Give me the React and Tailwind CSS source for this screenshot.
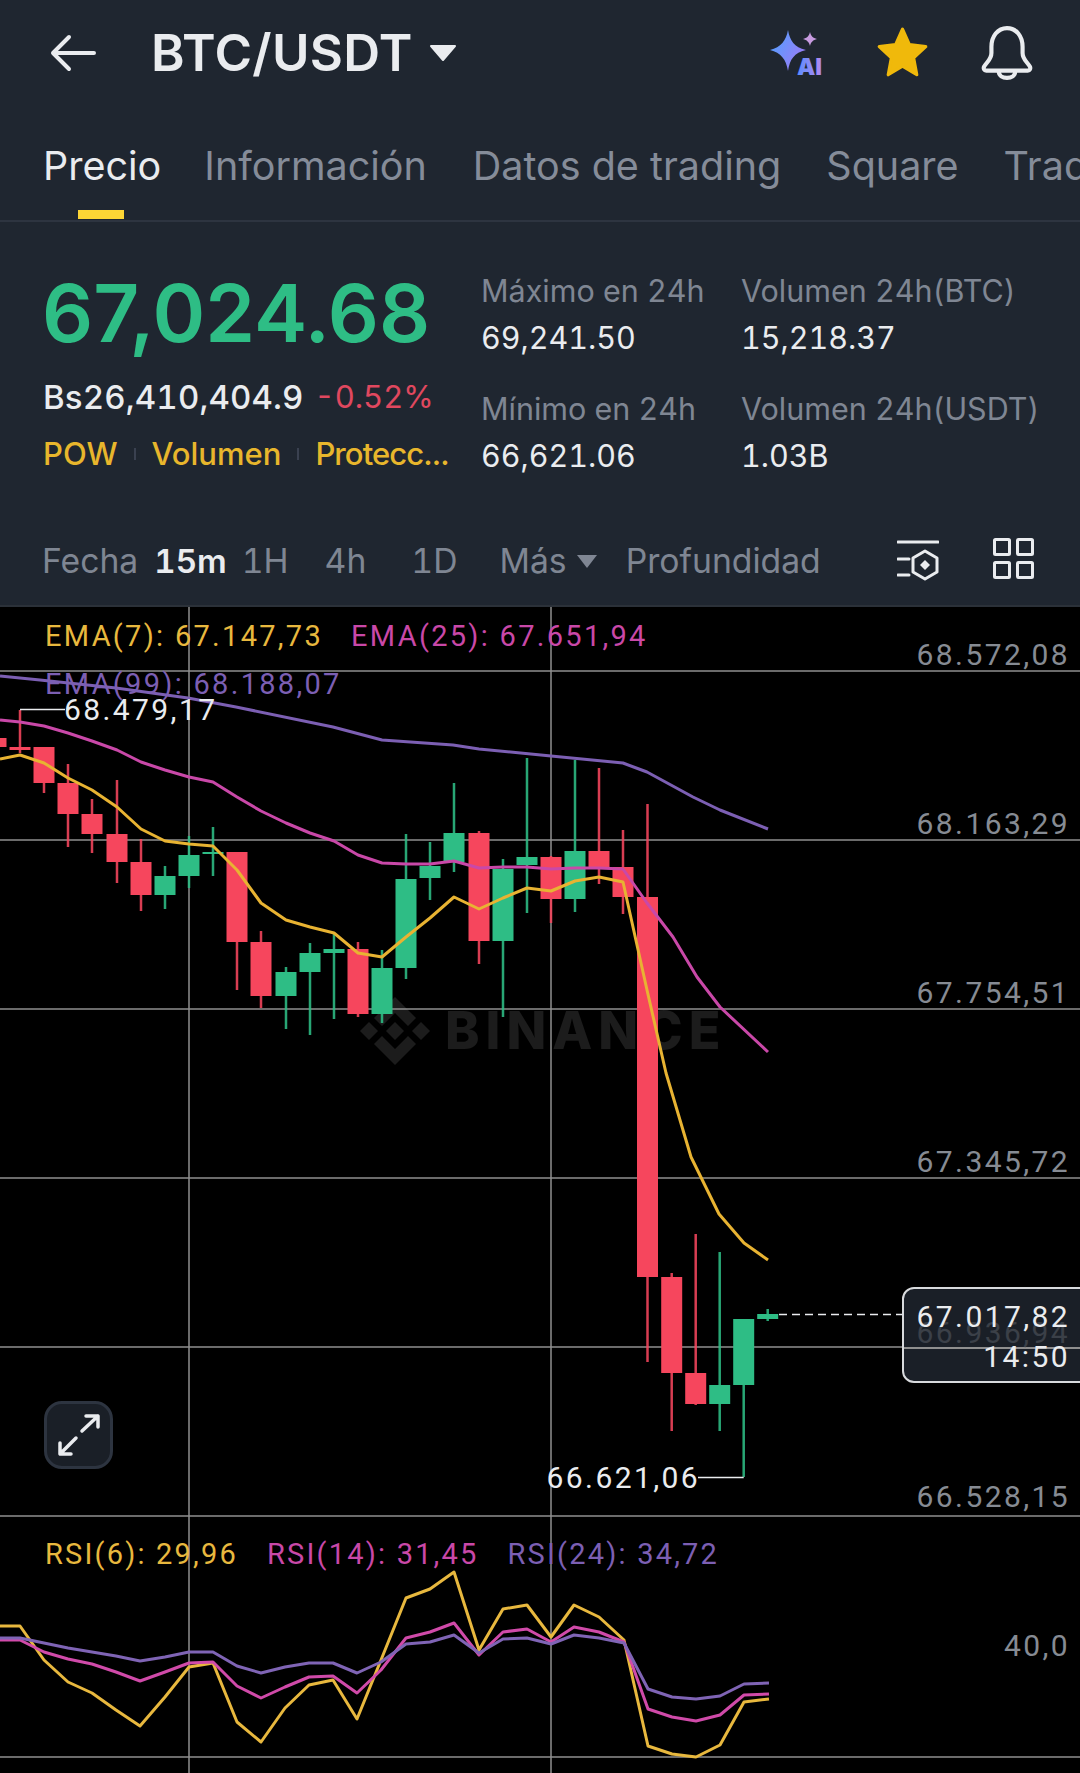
import React from 'react';

const RED = '#f6465d';
const GREEN = '#2ebd85';

// [x centre, up?, wick top, body top, body bottom, wick bottom] in page pixels
const candles = [
  [-4, 0, 738, 738, 747, 747],
  [20, 0, 710, 747, 750, 753],
  [44, 0, 747, 747, 783, 793],
  [68, 0, 764, 783, 814, 847],
  [92, 0, 799, 814, 834, 853],
  [117, 0, 780, 834, 862, 883],
  [141, 0, 839, 862, 895, 911],
  [165, 1, 866, 876, 895, 909],
  [189, 1, 836, 855, 876, 888],
  [213, 1, 827, 852, 854, 876],
  [237, 0, 852, 852, 942, 990],
  [261, 0, 931, 942, 996, 1008],
  [286, 1, 967, 972, 996, 1029],
  [310, 1, 943, 953, 972, 1035],
  [334, 1, 934, 949, 953, 1019],
  [358, 0, 942, 949, 1014, 1017],
  [382, 1, 950, 968, 1014, 1023],
  [406, 1, 834, 879, 968, 979],
  [430, 1, 842, 866, 878, 900],
  [454, 1, 783, 833, 862, 872],
  [479, 0, 831, 833, 941, 964],
  [503, 1, 859, 869, 941, 1017],
  [527, 1, 758, 857, 865, 913],
  [551, 0, 856, 857, 899, 923],
  [575, 1, 760, 851, 899, 912],
  [599, 0, 768, 851, 868, 884],
  [623, 0, 830, 867, 897, 914],
  [647.5, 0, 804, 897, 1277, 1362],
  [671.7, 0, 1273, 1277, 1373, 1431],
  [695.7, 0, 1234, 1373, 1404, 1405],
  [719.7, 1, 1252, 1385, 1404, 1431],
  [743.7, 1, 1319, 1319, 1385, 1477],
  [767.7, 1, 1309, 1314, 1319, 1321],
];

const ema99 = '0,676 40,680 116,688 188,698 236,707 333,727 382,740 453,745 479,749 551,756 623,763 647,772 693,797 720,810 768,829';
const ema25 = '0,720 20,722 44,726 68,733 92,741 117,750 141,762 165,770 189,777 213,782 237,797 261,811 286,823 310,833 334,841 358,855 382,863 406,864 430,864 454,861 479,868 503,867 527,867 551,869 575,868 599,868 623,869 647,903 673,937 697,977 720,1007 768,1052';
const ema7 = '0,759 20,755 44,763 68,778 92,790 117,807 141,829 165,841 189,844 213,846 237,870 261,903 286,920 310,927 334,933 358,953 382,957 406,937 430,918 454,897 479,909 503,898 527,888 551,891 575,881 599,877 623,882 647,990 666,1073 691,1157 719,1214 744,1243 768,1260';

const rsi6 = '0,1626 20,1626 44,1660 68,1682 92,1693 116,1710 140,1726 165,1697 189,1667 213,1663 237,1722 261,1742 285,1708 309,1685 333,1680 357,1719 381,1660 406,1598 430,1589 454,1572 479,1650 503,1609 527,1605 551,1637 574,1605 599,1617 624,1640 648,1746 672,1754 696,1757 720,1745 744,1702 769,1699';
const rsi14 = '0,1640 20,1640 44,1652 68,1659 92,1664 116,1672 140,1681 165,1672 189,1663 213,1662 237,1686 261,1698 285,1687 309,1677 333,1676 357,1693 381,1670 406,1638 430,1632 454,1623 479,1655 503,1632 527,1629 551,1642 574,1627 599,1632 624,1642 648,1709 672,1717 696,1721 720,1715 744,1695 769,1694';
const rsi24 = '0,1638 20,1638 44,1643 68,1648 92,1652 116,1656 140,1661 165,1657 189,1652 213,1652 237,1666 261,1673 285,1667 309,1663 333,1663 357,1673 381,1662 406,1644 430,1642 454,1635 479,1653 503,1639 527,1638 551,1644 574,1635 599,1638 624,1643 648,1689 672,1697 696,1699 720,1696 744,1684 769,1683';

const gridRows = [671, 840, 1009, 1178, 1347, 1516, 1757];
const gridCols = [189, 551];

const ChartDrawing = () => (
  <svg className="absolute inset-0" width="1080" height="1166" viewBox="0 607 1080 1166">
    {/* watermark logo */}
    <g fill="#1c1c1c" transform="translate(395 1031)">
      <path d="M0 -34 L21 -13 L13 -5 L0 -18 L-13 -5 L-21 -13 Z" />
      <path d="M0 34 L21 13 L13 5 L0 18 L-13 5 L-21 13 Z" />
      <path d="M0 -9 L9 0 L0 9 L-9 0 Z" />
      <path d="M-26 -9 L-17 0 L-26 9 L-35 0 Z" />
      <path d="M26 -9 L35 0 L26 9 L17 0 Z" />
    </g>

    {gridRows.map((y) => (
      <line key={y} x1="0" x2="1080" y1={y} y2={y} stroke="#8f8f8f" strokeWidth="1.5" />
    ))}
    {gridCols.map((x) => (
      <line key={x} x1={x} x2={x} y1="607" y2="1773" stroke="#8f8f8f" strokeWidth="1.5" />
    ))}

    {candles.map(([x, up, wickTop, bodyTop, bodyBottom, wickBottom]) => (
      <g key={x} fill={up ? GREEN : RED}>
        <rect x={x - 1.25} y={wickTop} width="2.5" height={wickBottom - wickTop} opacity="0.88" />
        <rect x={x - 10.5} y={bodyTop} width="21" height={bodyBottom - bodyTop} />
      </g>
    ))}

    <g fill="none" strokeWidth="3" strokeLinejoin="round">
      <polyline points={ema99} stroke="#7c5fb3" />
      <polyline points={ema25} stroke="#c948a8" />
      <polyline points={ema7} stroke="#e8b332" />
      <polyline points={rsi6} stroke="#e8b83e" />
      <polyline points={rsi14} stroke="#d04aa9" />
      <polyline points={rsi24} stroke="#7f64b5" />
    </g>

    {/* high, low and last price leaders */}
    <path d="M20 709.5 H65" stroke="#eaecef" strokeWidth="1.5" fill="none" />
    <path d="M743.7 1477.5 H698" stroke="#eaecef" strokeWidth="1.5" fill="none" />
    <path d="M779 1314.5 H902" stroke="#eaecef" strokeWidth="1.5" strokeDasharray="8 5" fill="none" />
  </svg>
);

const AiIcon = () => (
  <svg width="54" height="48" viewBox="0 0 54 48">
    <defs>
      <linearGradient id="aiStar" x1="0" y1="0" x2="1" y2="0.6">
        <stop offset="0" stopColor="#4aa3ff" />
        <stop offset="1" stopColor="#9b7cf6" />
      </linearGradient>
      <linearGradient id="aiText" x1="0" y1="0" x2="1" y2="0">
        <stop offset="0" stopColor="#5b8dff" />
        <stop offset="1" stopColor="#b48af0" />
      </linearGradient>
    </defs>
    <path d="M18 1 C20 12 24 18 36 21 C24 24 20 30 18 42 C16 30 11 24 0 21 C11 18 16 12 18 1 Z" fill="url(#aiStar)" />
    <path d="M40 3 C41 7 43 9 47 10 C43 11 41 13 40 17 C39 13 37 11 33 10 C37 9 39 7 40 3 Z" fill="#c79be0" />
    <text x="27" y="46" fontFamily="Inter, sans-serif" fontWeight="900" fontSize="23" fill="url(#aiText)">AI</text>
  </svg>
);

const StarIcon = () => (
  <svg width="55" height="53" viewBox="0 0 52 50">
    <path
      d="M26 3 L32.5 17.5 L48 19.5 L36.5 30 L39.5 46 L26 38 L12.5 46 L15.5 30 L4 19.5 L19.5 17.5 Z"
      fill="#f0b90b"
      stroke="#f0b90b"
      strokeWidth="3"
      strokeLinejoin="round"
    />
  </svg>
);

const BellIcon = () => (
  <svg width="52" height="54" viewBox="0 0 50 52" fill="none" stroke="#eaecef" strokeWidth="4" strokeLinejoin="round">
    <path d="M10 26 V20 C10 10 16 2 25 2 C34 2 40 10 40 20 V26 C40 32 44 34 47 39 C48 41 47 43 45 43 H5 C3 43 2 41 3 39 C6 34 10 32 10 26 Z" />
    <path d="M17 43 C17 48 21 50 25 50 C29 50 33 48 33 43" />
  </svg>
);

const App = () => {
  return (
    <div className="w-[1080px] h-[1773px] overflow-hidden bg-[#1f2630] font-['Inter',sans-serif] text-[#eaecef]">
      {/* top bar */}
      <div className="h-[105px] flex items-center pl-[50px] pr-[47px]">
        <svg width="46" height="38" viewBox="0 0 46 38" fill="none" stroke="#eaecef" strokeWidth="4" strokeLinecap="round" strokeLinejoin="round">
          <path d="M44 19 H3 M19 3 L3 19 L19 35" />
        </svg>
        <div className="ml-[55px] text-[51px] leading-none font-semibold tracking-[0.3px]">BTC/USDT</div>
        <svg className="ml-[16px]" width="28" height="18" viewBox="0 0 28 18">
          <path d="M2 2 H26 L14 16 Z" fill="#eaecef" stroke="#eaecef" strokeWidth="2" strokeLinejoin="round" />
        </svg>
        <div className="ml-auto flex items-center gap-[51px]">
          <AiIcon />
          <StarIcon />
          <BellIcon />
        </div>
      </div>

      {/* tabs */}
      <div className="h-[117px] flex items-center pl-[43px] border-b-2 border-[#2d3440] overflow-hidden text-[39.5px] leading-none text-[#858c99] whitespace-nowrap">
        <div className="relative text-[#eaecef] mt-[8px]">
          Precio
          <div className="absolute left-[35px] top-[63px] w-[46px] h-[9px] bg-[#fcd535]" />
        </div>
        <div className="ml-[43px] mt-[8px]">Información</div>
        <div className="ml-[46px] mt-[8px]">Datos de trading</div>
        <div className="ml-[45px] mt-[8px]">Square</div>
        <div className="ml-[45px] mt-[8px]">Trading</div>
      </div>

      {/* price summary */}
      <div className="h-[316px] flex pl-[43px]">
        <div className="w-[438px] pt-[48px]">
          <div className="text-[80px] leading-[86px] font-semibold -ml-[1px] text-[#2ebd85]">67,024.68</div>
          <div className="mt-[21px] flex items-center gap-[11px] leading-[40px] tabular-nums">
            <span className="text-[33px] font-medium tracking-[0.15px]">Bs26,410,404.9</span>
            <span className="text-[31px] text-[#e0485f]">-0.52%</span>
          </div>
          <div className="mt-[18px] flex items-center text-[31px] leading-[38px] font-medium text-[#e8b62c]">
            <span>POW</span>
            <span className="mx-[16px] w-[2px] h-[12px] bg-[#3a4150]" />
            <span>Volumen</span>
            <span className="mx-[16px] w-[2px] h-[12px] bg-[#3a4150]" />
            <span className="tracking-[-0.9px]">Protecc...</span>
          </div>
        </div>
        <div className="grid grid-cols-[260px_1fr] grid-rows-[118px_118px] pt-[45px] text-[30.5px] leading-[47px] tabular-nums">
          <div>
            <div className="text-[#7f8693]">Máximo en 24h</div>
            <div>69,241.50</div>
          </div>
          <div>
            <div className="text-[#7f8693]">Volumen 24h(BTC)</div>
            <div>15,218.37</div>
          </div>
          <div>
            <div className="text-[#7f8693]">Mínimo en 24h</div>
            <div>66,621.06</div>
          </div>
          <div>
            <div className="text-[#7f8693]">Volumen 24h(USDT)</div>
            <div>1.03B</div>
          </div>
        </div>
      </div>

      {/* intervals */}
      <div className="h-[69px] flex items-start pt-[3px] pl-[42px] pr-[46px] text-[33.7px] leading-[40px] text-[#7f8693] border-b-2 border-[#2b3139] tabular-nums">
        <span>Fecha</span>
        <span className="ml-[16px] text-[33px] font-semibold text-[#eaecef]">15m</span>
        <span className="ml-[15px]">1H</span>
        <span className="ml-[36px]">4h</span>
        <span className="ml-[45px]">1D</span>
        <span className="ml-[42px]">Más</span>
        <svg className="ml-[9px] mt-[13px]" width="22" height="15" viewBox="0 0 22 15">
          <path d="M1 1 H21 L11 14 Z" fill="#7f8693" />
        </svg>
        <span className="ml-[28px]">Profundidad</span>
        <svg className="ml-auto -mt-[2px]" width="42" height="42" viewBox="0 0 42 42" fill="none" stroke="#eaecef" strokeWidth="3" strokeLinecap="round" strokeLinejoin="round">
          <path d="M1 3 H41 M1 20 H12 M1 36 H12" />
          <path d="M28 12 L40 19 V33 L28 40 L16 33 V19 Z" />
          <path d="M28 21 L33 26 L28 31 L23 26 Z" fill="#eaecef" stroke="none" />
        </svg>
        <svg className="ml-[54px] -mt-[3px]" width="41" height="41" viewBox="0 0 41 41" fill="none" stroke="#eaecef" strokeWidth="3" strokeLinejoin="round">
          <rect x="1.5" y="1.5" width="15" height="15" rx="1" />
          <rect x="24.5" y="1.5" width="15" height="15" rx="1" />
          <rect x="1.5" y="24.5" width="15" height="15" rx="1" />
          <rect x="24.5" y="24.5" width="15" height="15" rx="1" />
        </svg>
      </div>

      {/* chart */}
      <div className="relative h-[1166px] bg-black font-['Roboto',sans-serif] text-[29px] leading-none tracking-[2.3px] whitespace-nowrap">
        <div className="absolute left-[445px] top-[398px] font-['Inter',sans-serif] font-extrabold text-[52px] leading-none tracking-[6px] text-[#1c1c1c]">BINANCE</div>

        <ChartDrawing />

        <div className="absolute left-[45px] top-[15px] flex gap-[28px]">
          <span className="text-[#e8b83e]">EMA(7): 67.147,73</span>
          <span className="text-[#c948a8]">EMA(25): 67.651,94</span>
        </div>
        <div className="absolute left-[45px] top-[63px] text-[#7c5fb3]">EMA(99): 68.188,07</div>
        <div className="absolute left-[64px] top-[88px] text-[30px] tracking-[2.4px] text-[#eaecef]">68.479,17</div>
        <div className="absolute right-[380px] top-[856px] text-[30px] tracking-[2.4px] text-[#eaecef]">66.621,06</div>

        {/* price axis */}
        <div className="absolute right-[10px] top-[33px] text-[30px] tracking-[2.4px] text-[#868b93]">68.572,08</div>
        <div className="absolute right-[10px] top-[202px] text-[30px] tracking-[2.4px] text-[#868b93]">68.163,29</div>
        <div className="absolute right-[10px] top-[371px] text-[30px] tracking-[2.4px] text-[#868b93]">67.754,51</div>
        <div className="absolute right-[10px] top-[540px] text-[30px] tracking-[2.4px] text-[#868b93]">67.345,72</div>
        <div className="absolute right-[10px] top-[875px] text-[30px] tracking-[2.4px] text-[#868b93]">66.528,15</div>
        <div className="absolute right-[10px] top-[1024px] text-[30px] tracking-[2.4px] text-[#868b93]">40,0</div>

        {/* last price tag */}
        <div className="absolute left-[902px] top-[680px] w-[190px] h-[96px] rounded-[12px] border-2 border-[#d8dadd] bg-[#1a1f27] text-right text-[30px] tracking-[2.4px] pr-[20px] pt-[13px]">
          <div className="absolute left-0 right-0 top-[58px] h-[1.5px] bg-[#8f8f8f]" />
          <div className="absolute right-[20px] top-[29px] text-[#3b4048]">66.936,94</div>
          <div className="relative text-[#eaecef]">67.017,82</div>
          <div className="relative mt-[10px] text-[#eaecef]">14:50</div>
        </div>

        {/* expand button */}
        <div className="absolute left-[44px] top-[794px] w-[69px] h-[68px] rounded-[18px] bg-[#1a1f27] border-[3px] border-[#2d3440] flex items-center justify-center">
          <svg width="46" height="46" viewBox="0 0 46 46" fill="none" stroke="#eaecef" strokeWidth="3.5" strokeLinecap="round" strokeLinejoin="round">
            <path d="M26 19 L42 4 M30 4 H42 V15" />
            <path d="M20 26 L4 42 M4 31 V42 H15" />
          </svg>
        </div>

        {/* RSI legend */}
        <div className="absolute left-[45px] top-[933px] flex gap-[29px] tracking-[2.2px]">
          <span className="text-[#e8b83e]">RSI(6): 29,96</span>
          <span className="text-[#c948a8]">RSI(14): 31,45</span>
          <span className="text-[#7c5fb3]">RSI(24): 34,72</span>
        </div>
      </div>
    </div>
  );
};

export default App;
